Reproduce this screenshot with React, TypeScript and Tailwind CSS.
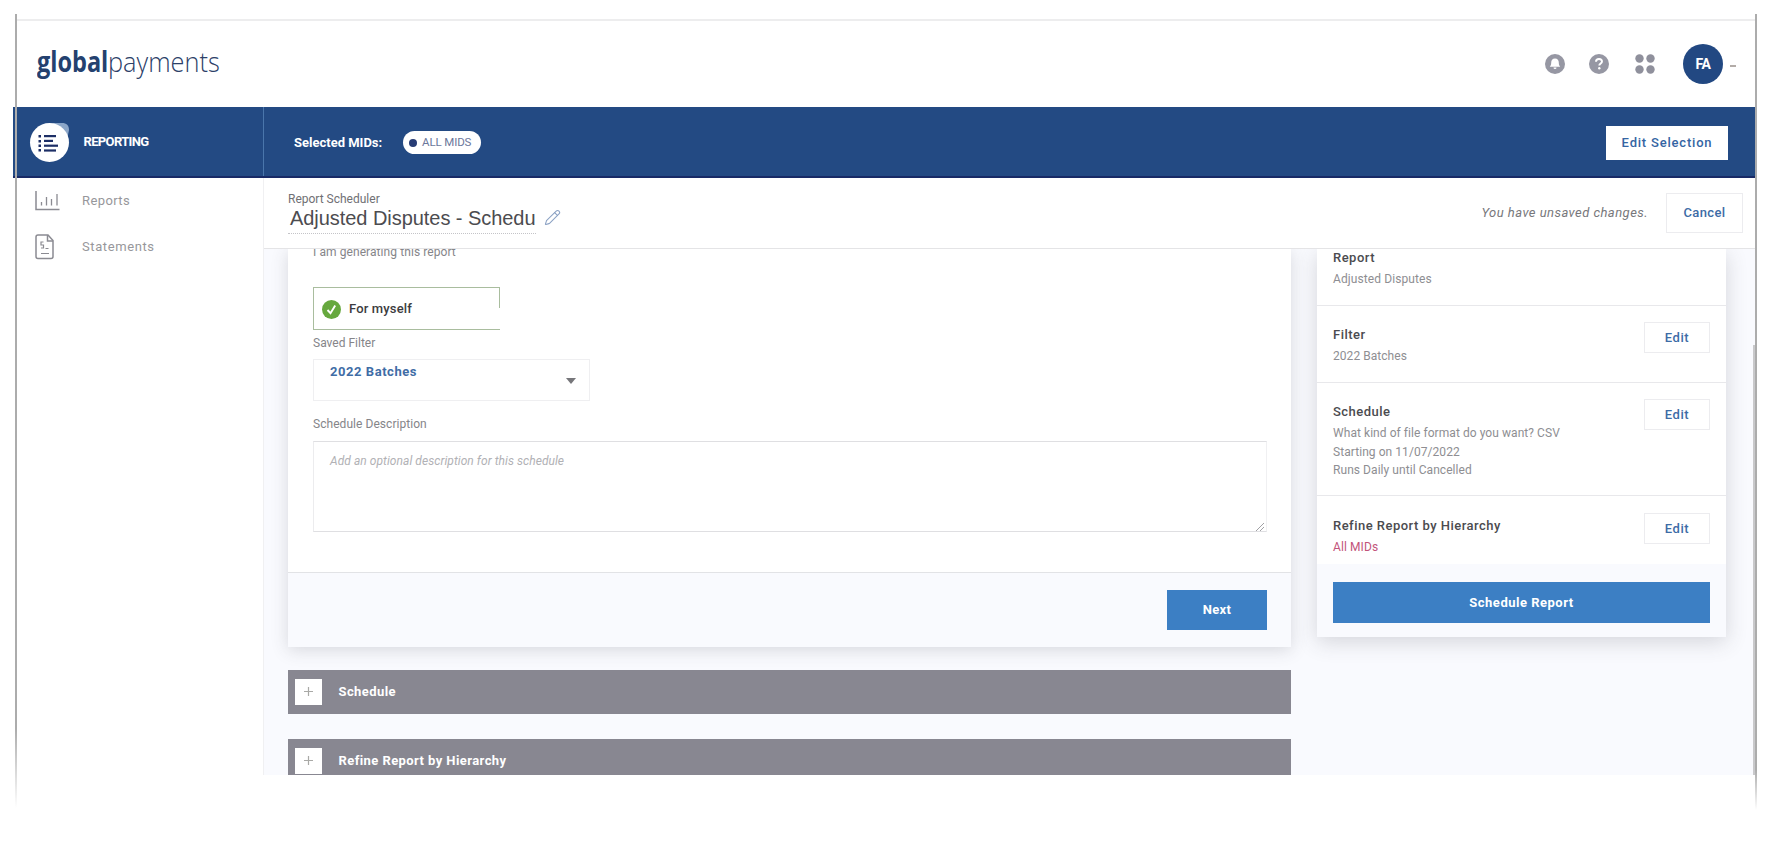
import React from 'react';
import { Pencil } from 'lucide-react';

type SummaryItem = {
  title: string;
  lines: string[];
  lineClass: string;
  rowClass: string;
  editable?: boolean;
};

const summary: SummaryItem[] = [
  {
    title: 'Report',
    lines: ['Adjusted Disputes'],
    lineClass: 'text-[#8e8e92] tracking-[0.1px]',
    rowClass: 'h-[57px] border-b',
  },
  {
    title: 'Filter',
    lines: ['2022 Batches'],
    lineClass: 'text-[#8e8e92] tracking-[0.05px]',
    rowClass: 'h-[77px] pt-[20px] border-b',
    editable: true,
  },
  {
    title: 'Schedule',
    lines: ['What kind of file format do you want? CSV', 'Starting on 11/07/2022', 'Runs Daily until Cancelled'],
    lineClass: 'text-[#8e8e92] tracking-[0.06px]',
    rowClass: 'h-[113px] pt-[20px] border-b',
    editable: true,
  },
  {
    title: 'Refine Report by Hierarchy',
    lines: ['All MIDs'],
    lineClass: 'text-[#c2547a] tracking-[0.1px]',
    rowClass: 'h-[68px] pt-[21px]',
    editable: true,
  },
];

const ReportingIcon: React.FC = () => (
  <svg width="42" height="42" viewBox="0 0 42 42">
    <path d="M24 2h9c4.500 0 7 2.500 7 7l-2 10z" fill="#8ba6c8" />
    <circle cx="20.500" cy="21.500" r="19.500" fill="#fff" />
    <g fill="#1d2f66">
      <rect x="9.500" y="14" width="2.500" height="2.500" />
      <rect x="9.500" y="19" width="2.500" height="2.500" />
      <rect x="9.500" y="23.500" width="2.500" height="2.500" />
      <rect x="9.500" y="28" width="2.500" height="2.500" />
      <rect x="15" y="14" width="12" height="2.200" />
      <rect x="15" y="18.800" width="9" height="2.200" />
      <rect x="15" y="23.600" width="14" height="2.200" />
      <rect x="15" y="28.400" width="12" height="2.200" />
    </g>
  </svg>
);

const ChartIcon: React.FC = () => (
  <svg width="25" height="20" viewBox="0 0 25 20" fill="none" stroke="#8b8b92" strokeWidth="1.5">
    <path d="M1 0v18.500h23.500" />
    <path d="M6.500 14.500V11M11.500 14.500V6M16.500 14.500V8M22 14.500V3" strokeWidth="1.300" />
  </svg>
);

const StatementIcon: React.FC = () => (
  <svg width="20" height="26" viewBox="0 0 20 26" fill="none" stroke="#8b8b92" strokeWidth="1.5">
    <path d="M3 1h10l5 5.500v16a2 2 0 0 1-2 2H3a2 2 0 0 1-2-2V3a2 2 0 0 1 2-2z" />
    <path d="M12.500 1v6H18" />
    <path d="M8.500 8H6v3h2.500v3H6M10.500 14.500h3M6 19.500h8" strokeWidth="1.200" />
  </svg>
);

const BellIcon: React.FC = () => (
  <svg width="20" height="20" viewBox="0 0 20 20">
    <circle cx="10" cy="10" r="10" fill="#9697a3" />
    <path d="M10 4.500c2.600 0 3.800 1.900 3.800 4.200 0 2.200.7 3 1.400 4.100H4.800c.7-1.100 1.400-1.900 1.400-4.100 0-2.300 1.200-4.200 3.800-4.200z" fill="#fff" />
    <path d="M8.500 13.500h3a1.500 1.500 0 0 1-3 0z" fill="#fff" />
  </svg>
);

const HelpIcon: React.FC = () => (
  <svg width="20" height="20" viewBox="0 0 20 20" fill="none">
    <circle cx="10" cy="10" r="10" fill="#9697a3" />
    <path d="M7 7.800c0-1.700 1.300-2.800 3-2.800s3 1 3 2.600c0 1.900-2.700 2-2.700 4" stroke="#fff" strokeWidth="1.900" />
    <circle cx="10.300" cy="14.300" r="1.200" fill="#fff" />
  </svg>
);

const AppsIcon: React.FC = () => (
  <svg width="20" height="20" viewBox="0 0 20 20" fill="#8f909c">
    <circle cx="4.500" cy="4.500" r="4.200" />
    <circle cx="15.500" cy="4.500" r="4.200" />
    <circle cx="4.500" cy="15.500" r="4.200" />
    <circle cx="15.500" cy="15.500" r="4.200" />
  </svg>
);

const CheckIcon: React.FC = () => (
  <svg width="19" height="19" viewBox="0 0 19 19" fill="none">
    <circle cx="9.500" cy="9.500" r="9.500" fill="#66a83e" />
    <path d="M5.500 10l3 3.200 4.700-7.700" stroke="#fff" strokeWidth="1.900" />
  </svg>
);

const Accordion: React.FC<{ title: string }> = ({ title }) => (
  <div className="flex h-11 w-[1003px] shrink-0 items-start bg-[#888791] pl-[7px] pt-[8.500px]">
    <div className="flex h-[26px] w-[27px] items-center justify-center bg-white">
      <svg width="9" height="9" viewBox="0 0 9 9" stroke="#a9a9a6" strokeWidth="1.200">
        <path d="M4.500 0v9M0 4.500h9" />
      </svg>
    </div>
    <span className="ml-[16.500px] text-[13px] font-bold leading-[26px] tracking-[0.420px] text-white">{title}</span>
  </div>
);

export default function App() {
  return (
    <div className="relative h-[850px] w-[1780px] overflow-hidden bg-white pl-[13px] pt-[14px] font-['Roboto',sans-serif]">
      <div className="flex h-[761px] w-[1742px] flex-col overflow-hidden">
        {/* Top header */}
        <header className="flex h-[93px] shrink-0 flex-col">
          <div className="ml-0.5 mt-[5px] h-0.5 bg-[#ededee]" />
          <div className="flex h-[86px] items-center pl-[24px] pr-[19px]">
            <div className="-mt-[7px] flex h-10 w-[184px] items-center font-['Open_Sans',sans-serif] text-[28px] leading-none text-[#24416f]">
              <span className="inline-block w-[71px] origin-left scale-x-[0.840] font-bold">global</span>
              <span className="inline-block origin-left scale-x-[0.905] font-light text-[#2c4068]">payments</span>
            </div>
            <div className="ml-auto flex items-center">
              <BellIcon />
              <span className="ml-6"><HelpIcon /></span>
              <span className="ml-[26px]"><AppsIcon /></span>
              <div className="ml-[28px] flex size-10 items-center justify-center rounded-full bg-[#224882] text-[14px] font-bold tracking-[-0.500px] text-white">
                FA
              </div>
              <div className="ml-[7px] mt-1 h-[1.500px] w-1.5 bg-[#b3aca8]" />
            </div>
          </div>
        </header>

        {/* Blue bar */}
        <div className="flex h-[71px] shrink-0 border-b-2 border-[#182a66] bg-[#234a83] text-white">
          <div className="flex w-[251px] items-center border-r border-[#4a76ab] pl-4">
            <ReportingIcon />
            <span className="ml-[12.500px] text-[13px] font-bold tracking-[-0.650px]">REPORTING</span>
          </div>
          <div className="flex flex-1 items-center pl-[30px] pr-[27px] pt-0.5">
            <span className="w-[109px] text-[13px] font-bold">Selected MIDs:</span>
            <div className="flex h-[23px] w-[78px] items-center rounded-full bg-white pl-1.5">
              <span className="size-[8px] rounded-full bg-[#273c74]" />
              <span className="ml-[5px] whitespace-nowrap text-[11.500px] tracking-[-0.120px] text-[#6b779b]">ALL MIDS</span>
            </div>
            <button className="ml-auto h-[34px] w-[122px] bg-white text-[13px] font-medium tracking-[0.800px] text-[#3565a3]">
              Edit Selection
            </button>
          </div>
        </div>

        <div className="flex min-h-0 flex-1">
          {/* Sidebar */}
          <nav className="w-[251px] shrink-0 border-r border-[#f0f0f2] pl-[22px] text-[13px] text-[#97979b]">
            <div className="flex h-[46px] items-center">
              <ChartIcon />
              <span className="ml-[22px] tracking-[0.400px]">Reports</span>
            </div>
            <div className="flex h-[46px] items-center">
              <StatementIcon />
              <span className="ml-[27px] tracking-[0.600px]">Statements</span>
            </div>
          </nav>

          <div className="flex min-w-0 flex-1 flex-col">
            {/* Sub header */}
            <div className="z-10 flex h-[71px] shrink-0 items-start border-b border-[#e4e4e6] bg-white pl-[24px] pr-3">
              <div className="pt-3.5">
                <div className="text-[12px] leading-[14px] text-[#707074]">Report Scheduler</div>
                <div className="flex">
                  <div className="h-[28px] w-[248px] overflow-hidden whitespace-nowrap border-b border-dotted border-[#c4c4c8] pl-0.5 font-['Liberation_Sans',sans-serif] text-[20px] leading-[24px] tracking-[-0.050px] text-[#4c4c50]">
                    Adjusted Disputes - Schedu
                  </div>
                  <Pencil size={17} strokeWidth={1.5} className="ml-2 mt-[3px] text-[#8ca2c4]" />
                </div>
              </div>
              <div className="ml-auto flex items-center pt-[15px]">
                <span className="text-[13px] italic tracking-[0.450px] text-[#77777b]">You have unsaved changes.</span>
                <button className="ml-[18px] h-[40px] w-[77px] border border-[#ececef] bg-white text-[13px] font-medium tracking-[0.400px] text-[#3d6ca6]">
                  Cancel
                </button>
              </div>
            </div>

            <div className="flex min-h-0 flex-1 items-start bg-[#f9fafe] pl-[24px]">
              {/* Left column */}
              <div className="flex w-[1003px] shrink-0 flex-col">
                <section className="flex h-[398px] w-[1003px] flex-col bg-white shadow-[0_3px_16px_rgba(60,60,70,0.18)]">
                  <div className="flex h-[323px] flex-col px-[25px] text-[12px] leading-[14px] text-[#858589]">
                    <div className="-mt-[4px] h-[42px] tracking-[0.080px]">I am generating this report</div>
                    <div className="flex h-[43px] w-[187px] border-y border-l border-[#a9bd9e]">
                      <div className="flex flex-1 items-center pl-[8px] pt-px">
                        <CheckIcon />
                        <span className="ml-[8px] text-[13px] font-medium tracking-[0.150px] text-[#3c3c40]">For myself</span>
                      </div>
                      <div className="h-[20px] w-px bg-[#a9bd9e]" />
                    </div>
                    <div className="mt-[6px]">Saved Filter</div>
                    <div className="mt-[9px] flex h-[42px] w-[277px] items-center justify-between border border-[#efeff1] pl-4 pr-[13px]">
                      <span className="-mt-[16px] text-[13px] font-bold tracking-[0.550px] text-[#3f6da6]">2022 Batches</span>
                      <span className="mt-0.5 size-0 border-x-[5px] border-t-[6px] border-x-transparent border-t-[#76767a]" />
                    </div>
                    <div className="mt-[16px] tracking-[0.050px]">Schedule Description</div>
                    <div className="relative mt-[10px] h-[91px] w-[954px] border border-[#dfdfe2] border-l-[#ececee] border-r-[#f0f0f2] pl-4 pt-[12px] text-[12px] italic tracking-[0.060px] text-[#b1b1b5]">
                      Add an optional description for this schedule
                      <svg className="absolute bottom-0 right-0.5" width="9" height="9" viewBox="0 0 9 9" stroke="#a0a0a4">
                        <path d="M1 9l8-8M5 9l4-4" />
                      </svg>
                    </div>
                  </div>
                  <div className="flex h-[75px] items-start justify-end border-t border-[#e2e3e6] bg-[#f9fafe] pr-6 pt-[17px]">
                    <button className="h-[40px] w-[100px] bg-[#3c7fc4] text-[13px] font-bold tracking-[0.300px] text-white">Next</button>
                  </div>
                </section>
                <div className="mt-[23px] flex flex-col gap-[25px]">
                  <Accordion title="Schedule" />
                  <Accordion title="Refine Report by Hierarchy" />
                </div>
              </div>

              {/* Summary */}
              <aside className="ml-[26px] flex h-[388px] w-[409px] shrink-0 flex-col bg-white shadow-[0_5px_20px_rgba(60,60,70,0.19)]">
                {summary.map((item) => (
                  <div key={item.title} className={`flex shrink-0 items-start border-[#e8e8eb] px-4 ${item.rowClass}`}>
                    <div className="-mt-px flex-1">
                      <div className="text-[13px] font-medium leading-[19px] tracking-[0.480px] text-[#4b4b4f]">{item.title}</div>
                      <div className={`pt-[3px] text-[12px] leading-[18.500px] ${item.lineClass}`}>
                        {item.lines.map((line) => (
                          <div key={line}>{line}</div>
                        ))}
                      </div>
                    </div>
                    {item.editable && (
                      <button className="-mt-[4px] h-[31px] w-[66px] border border-[#ececef] text-[13px] font-medium tracking-[0.600px] text-[#3d6ca6]">
                        Edit
                      </button>
                    )}
                  </div>
                ))}
                <div className="flex-1 bg-[#f9fafe] px-4 pt-[18px]">
                  <button className="h-[41px] w-full bg-[#3c7fc4] text-[13px] font-bold tracking-[0.500px] text-white">
                    Schedule Report
                  </button>
                </div>
              </aside>
            </div>
          </div>
        </div>
      </div>

      {/* Window edges that fade out below the page, and the scroll thumb */}
      <div className="absolute left-[15px] top-[14px] h-[794px] w-[1.500px] bg-gradient-to-b from-[#acacac] from-90% to-transparent" />
      <div className="absolute left-[1755px] top-[14px] h-[796px] w-[2px] bg-gradient-to-b from-[#acacac] from-95% to-transparent" />
      <div className="absolute left-[1753px] top-[345px] h-[430px] w-[2px] bg-[#c9c9cb]" />
    </div>
  );
}
